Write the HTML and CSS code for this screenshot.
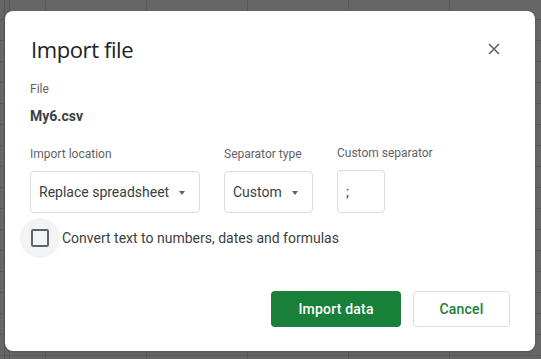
FILE: index.html
```html
<!DOCTYPE html>
<html>
<head>
<meta charset="utf-8">
<link rel="stylesheet" href="styles.css">
</head>
<body>
<div class="sheet">
  <div class="dialog">
    <div class="header">
      <h1 class="title">Import file</h1>
      <button class="close" aria-label="Close">
        <svg width="12" height="12" viewBox="0 0 12 12"><path d="M1 1L11 11M11 1L1 11" stroke="#5f6368" stroke-width="1.6" fill="none"/></svg>
      </button>
    </div>
    <div class="label file-label">File</div>
    <div class="filename">My6.csv</div>
    <div class="fields">
      <div class="field f-loc">
        <div class="label">Import location</div>
        <div class="select"><span>Replace spreadsheet</span><span class="arrow"></span></div>
      </div>
      <div class="field f-sep">
        <div class="label">Separator type</div>
        <div class="select"><span>Custom</span><span class="arrow"></span></div>
      </div>
      <div class="field f-custom">
        <div class="label">Custom separator</div>
        <div class="input">;</div>
      </div>
    </div>
    <div class="check-row">
      <div class="check-halo"><span class="checkbox"></span></div>
      <span class="check-text">Convert text to numbers, dates and formulas</span>
    </div>
    <div class="actions">
      <button class="btn primary">Import data</button>
      <button class="btn secondary">Cancel</button>
    </div>
  </div>
</div>
</body>
</html>
```
FILE: styles.css
```css
html, body {
  margin: 0;
  padding: 0;
  width: 541px;
  height: 359px;
  overflow: hidden;
}
body {
  background-color: #666666;
  background-image:
    linear-gradient(to right, transparent 4px, #595959 4px, #595959 5px, transparent 5px),
    repeating-linear-gradient(to right, #595959 0, #595959 1px, transparent 1px, transparent 101px),
    repeating-linear-gradient(to bottom, transparent 0, transparent 20px, #595959 20px, #595959 21px);
  background-position: 0 0, 45px 0, 0 -1px;
  font-family: Roboto, "Liberation Sans", sans-serif;
}
.sheet {
  padding: 11px 0 0 5px;
}
.dialog {
  box-sizing: border-box;
  width: 530px;
  height: 340px;
  background: #ffffff;
  border-radius: 8px;
  padding: 24px 25px 24px 25px;
  display: flex;
  flex-direction: column;
  box-shadow: 0 1px 3px rgba(0,0,0,0.2);
}
.header {
  display: flex;
  align-items: center;
  justify-content: space-between;
  height: 28px;
}
.title {
  margin: 0 0 0 1px;
  font-family: "Open Sans", Roboto, sans-serif;
  font-weight: 400;
  font-size: 22px;
  line-height: 28px;
  color: #202124;
  letter-spacing: -0.4px;
}
.close {
  width: 24px;
  height: 24px;
  border: 0;
  background: none;
  padding: 0;
  margin-right: 4px;
  display: flex;
  align-items: center;
  justify-content: center;
}
.label {
  font-size: 12px;
  line-height: 16px;
  color: #5f6368;
  white-space: nowrap;
}
.file-label {
  margin-top: 18px;
}
.filename {
  margin-top: 9px;
  font-size: 14px;
  line-height: 20px;
  font-weight: 700;
  color: #3c4043;
}
.fields {
  margin-top: 20px;
  display: flex;
}
.field .label {
  margin-bottom: 9px;
}
.f-loc { width: 170px; }
.f-sep { width: 89px; margin-left: 24px; }
.f-custom { width: 48px; margin-left: 24px; margin-top: -1px; }
.select {
  box-sizing: border-box;
  height: 42px;
  border: 1px solid #dadce0;
  border-radius: 4px;
  display: flex;
  align-items: center;
  justify-content: space-between;
  padding: 0 14px 0 8px;
  font-size: 14px;
  color: #3c4043;
}
.arrow {
  width: 0;
  height: 0;
  border-left: 3.5px solid transparent;
  border-right: 3.5px solid transparent;
  border-top: 4px solid #5f6368;
  margin-top: 1px;
}
.input {
  box-sizing: border-box;
  height: 43px;
  border: 1px solid #dadce0;
  border-radius: 4px;
  display: flex;
  align-items: center;
  padding-left: 8px;
  font-size: 14px;
  color: #3c4043;
}
.check-row {
  margin-top: 5px;
  margin-left: -10px;
  display: flex;
  align-items: center;
  height: 40px;
}
.check-halo {
  width: 40px;
  height: 40px;
  border-radius: 50%;
  background: #f1f3f4;
  display: flex;
  align-items: center;
  justify-content: center;
}
.checkbox {
  box-sizing: border-box;
  width: 18px;
  height: 18px;
  border: 2px solid #5f6368;
  border-radius: 2px;
}
.check-text {
  margin-left: 2px;
  font-size: 14px;
  color: #3c4043;
}
.actions {
  margin-top: auto;
  display: flex;
  justify-content: flex-end;
  gap: 12px;
}
.btn {
  box-sizing: border-box;
  height: 36px;
  border-radius: 4px;
  font-family: Roboto, sans-serif;
  font-size: 14px;
  font-weight: 500;
  letter-spacing: 0.2px;
  padding: 0;
  cursor: pointer;
}
.primary {
  width: 130px;
  background: #188038;
  color: #ffffff;
  border: 0;
}
.secondary {
  width: 97px;
  background: #ffffff;
  color: #188038;
  border: 1px solid #dadce0;
}
```
